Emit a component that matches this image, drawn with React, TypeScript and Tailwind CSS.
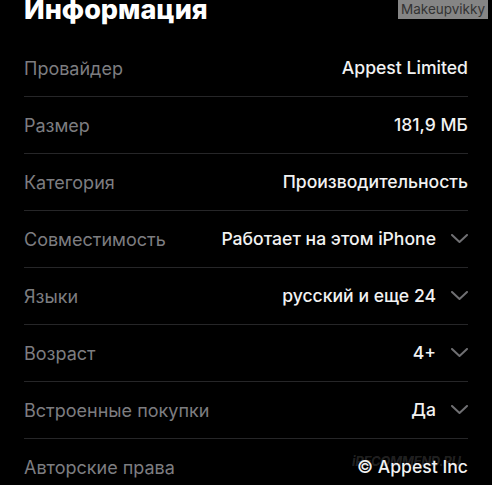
import React from 'react';

const ROWS = [
    { label: 'Провайдер', value: 'Appest Limited', more: false },
    { label: 'Размер', value: '181,9 МБ', more: false },
    { label: 'Категория', value: 'Производительность', more: false },
    { label: 'Совместимость', value: 'Работает на этом iPhone', more: true },
    { label: 'Языки', value: 'русский и еще 24', more: true },
    { label: 'Возраст', value: '4+', more: true },
    { label: 'Встроенные покупки', value: 'Да', more: true },
    { label: 'Авторские права', value: '© Appest Inc', more: false },
];

const Chevron = () => (
    <svg width="17" height="9" viewBox="0 0 17 9" className="ml-[15px] shrink-0" fill="none">
        <path d="M1 1l7.5 7 7.5-7" stroke="#6f6f72" strokeWidth="2" strokeLinecap="round" strokeLinejoin="round" />
    </svg>
);

const App: React.FC = () => {
    return (
        <div className="relative w-[492px] h-[485px] overflow-hidden bg-black font-['Inter',sans-serif]">
            <div className="absolute right-[4px] top-0 h-[19px] px-[3px] bg-[#858585] text-[#333] text-[13.5px] leading-[19px]">
                Makeupvikky
            </div>

            <h2 className="pl-[24px] mt-[-6px] text-[27px] leading-[32px] font-extrabold text-white">
                Информация
            </h2>

            <div className="mt-[14px] px-[24px]">
                {ROWS.map((row, i) => (
                    <div
                        key={row.label}
                        className={`flex items-center justify-between h-[57px] ${i < ROWS.length - 1 ? 'border-b border-[#262628]' : ''}`}
                    >
                        <span className="text-[18px] text-[#7d7d80]">{row.label}</span>
                        <div className="flex items-center">
                            <span className="text-[17.6px] font-medium text-[#f2f2f2]">{row.value}</span>
                            {row.more && <Chevron />}
                        </div>
                    </div>
                ))}
            </div>

            <div className="absolute left-[352px] top-[452px] text-[13px] font-bold italic text-white/15 tracking-tight">
                iRECOMMEND.RU
            </div>
        </div>
    );
};

export default App;
